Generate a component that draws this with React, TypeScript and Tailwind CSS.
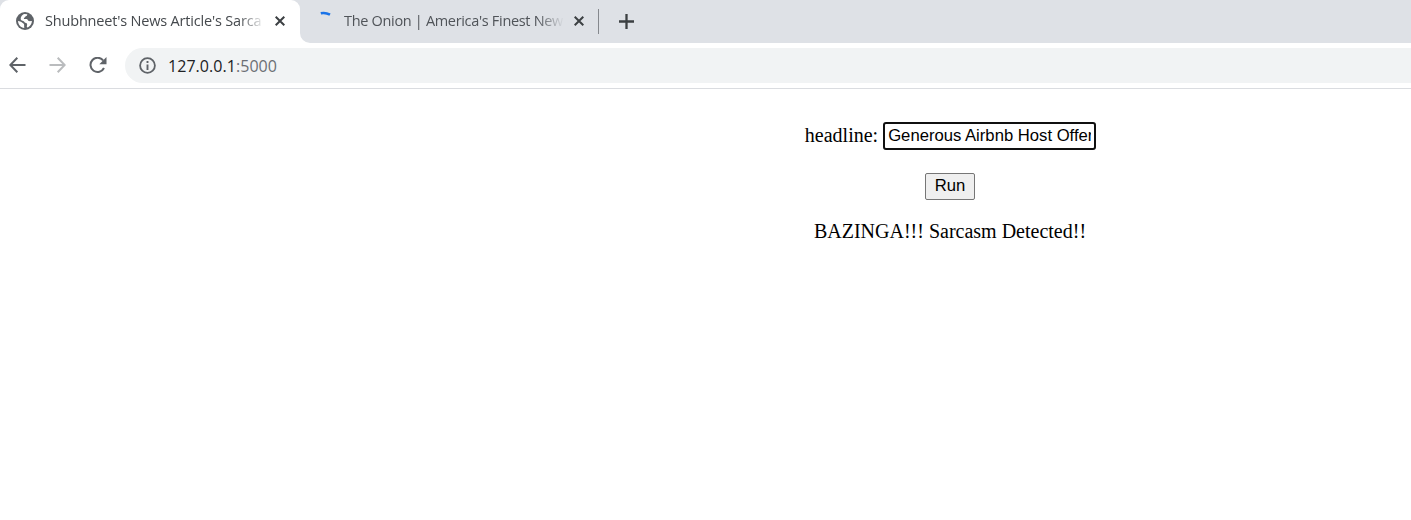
import React from "react";

const ui = "font-['Open_Sans','Noto_Sans',sans-serif]";

function Globe() {
  return (
    <svg className="h-[18px] w-[18px] shrink-0" viewBox="0 0 18 18" fill="none">
      <circle cx="9" cy="9" r="9" fill="#5f6368" />
      <path
        fill="#fff"
        d="M11.3 2.3C11.2 3.6 10.7 4.1 9.6 4.4C8.7 4.6 8.8 5.5 8.1 5.9C7.5 6.4 7.9 7 8.7 7H10.6C11.7 7.1 11.7 8.1 12.3 8.7C13 9.4 14.4 9.1 15.9 9.1C15.9 11.9 14.2 14.4 11.8 15.4C10.7 15.3 10.6 14.4 11 13.5C11.4 12.4 11.1 11.4 10 11.1C8.9 10.9 8.6 10.2 8 9.5C7.2 8.7 5.8 8.9 5.1 8C4.4 7.1 4.7 5.8 5.2 4.8C5.8 3.4 7.1 2.4 8.5 2.1Z"
      />
      <path fill="#fff" d="M2 8.9C3.6 9 5.1 9.4 6.1 10.5C6.8 11.2 7.7 11.5 8 12.3C8.4 13.2 7.9 14 8.3 15.9C4.8 15.6 2.1 12.6 2 8.9Z" />
    </svg>
  );
}

function Close() {
  return (
    <svg className="h-[10px] w-[10px] shrink-0" viewBox="0 0 10 10" fill="none" stroke="#3c4043" strokeWidth="2">
      <path d="M.7.7 9.3 9.3M9.3.7.7 9.3" />
    </svg>
  );
}

function Title({ children, color }: { children: string; color: string }) {
  return (
    <div className="h-[30px] w-[220px] shrink-0 [mask-image:linear-gradient(to_right,black_88%,transparent)]">
      <span className={`${ui} ${color} block whitespace-nowrap text-[14.5px] leading-[30px]`}>{children}</span>
    </div>
  );
}

export default function App() {
  return (
    <div className="h-[520px] w-full overflow-hidden bg-white text-black">
      <div className="flex h-[43px] bg-[#dee1e6]">
        <div className="relative flex w-[300px] shrink-0 items-center rounded-t-[9px] bg-white pb-px pl-4">
          <Globe />
          <div className="ml-[11px] mr-[10px] flex">
            <Title color="text-[#45494d] tracking-[-0.18px]">Shubhneet's News Article's Sarca</Title>
          </div>
          <Close />
          <svg className="absolute -right-[10px] bottom-0 h-[10px] w-[10px]" viewBox="0 0 10 10">
            <path d="M0 0A10 10 0 0 0 10 10H0Z" fill="#fff" />
          </svg>
        </div>
        <div className="flex w-[299px] shrink-0 items-center pb-px pl-4">
          <svg className="-mt-px h-[20px] w-[18px] shrink-0" viewBox="0 0 18 20" fill="none">
            <path d="M4.8 2.3Q9.5 1.2 14 3.7" stroke="#1a73e8" strokeWidth="2.5" />
          </svg>
          <div className="ml-[10px] mr-[10px] flex">
            <Title color="text-[#505459] tracking-[-0.32px]">The Onion | America's Finest New</Title>
          </div>
          <Close />
          <div className="ml-[14px] mt-px h-[25px] w-px bg-[#85888d]" />
        </div>
        <div className="flex items-center pl-5">
          <svg className="h-[15px] w-[15px]" viewBox="0 0 15 15" fill="none" stroke="#3c4043" strokeWidth="2.3">
            <path d="M7.5 0V15M0 7.5H15" />
          </svg>
        </div>
      </div>
      <div className="flex h-[46px] items-center border-b border-[#dadce0] pl-[9px]">
        <svg className="-mt-[2px] h-4 w-[17px]" viewBox="0 0 17 16" fill="none" stroke="#5f6368" strokeWidth="2">
          <path d="M8.3.8 1.3 8 8.3 15.2M1.3 8H16.5" />
        </svg>
        <svg className="-mt-[2px] ml-[23px] h-4 w-[17px]" viewBox="0 0 17 16" fill="none" stroke="#babcbe" strokeWidth="2">
          <path d="M8.7.8 15.7 8 8.7 15.2M15.7 8H.5" />
        </svg>
        <svg className="ml-[23px] h-[17px] w-[18px]" viewBox="0 0 18 17" fill="none">
          <path d="M14.2 3.5A7.1 7.1 0 1 0 15 11" stroke="#5f6368" strokeWidth="2" />
          <path d="M17.5 0V7.2H10.3Z" fill="#5f6368" />
        </svg>
        <div className="ml-[18px] flex h-[35px] flex-1 items-center rounded-l-full bg-[#f1f3f4] pl-[14px]">
          <svg className="h-[17px] w-[17px]" viewBox="0 0 17 17" fill="none" stroke="#5f6368">
            <circle cx="8.5" cy="8.5" r="7.4" strokeWidth="1.8" />
            <path d="M8.5 7.5V13M8.5 4V6" strokeWidth="1.9" />
          </svg>
          <span className={`${ui} ml-[12px] text-base tracking-[0.05px] text-[#202124]`}>
            127.0.0.1<span className="text-[#6b6f74]">:5000</span>
          </span>
        </div>
      </div>
      <main className="ml-[489px] flex w-[922px] flex-col items-center pt-[33px] font-['Liberation_Serif',serif] text-[20px] leading-[23px]">
        <div className="flex h-7 items-center">
          <label htmlFor="headline" className="mr-[5px] -mt-px ml-px">headline:</label>
          <input
            id="headline"
            type="text"
            defaultValue="Generous Airbnb Host Offers"
            className="h-7 w-[213px] rounded-[3px] border-2 border-[#101010] bg-white px-[3px] pb-0 font-['Liberation_Sans',sans-serif] text-[16.667px] outline-none"
          />
        </div>
        <button className="mt-[23px] h-[27px] w-[50px] rounded-[2px] border border-[#767676] bg-[#efefef] font-['Liberation_Sans',sans-serif] text-[16.667px] leading-none">
          Run
        </button>
        <p className="mt-5">BAZINGA!!! Sarcasm Detected!!</p>
      </main>
    </div>
  );
}
